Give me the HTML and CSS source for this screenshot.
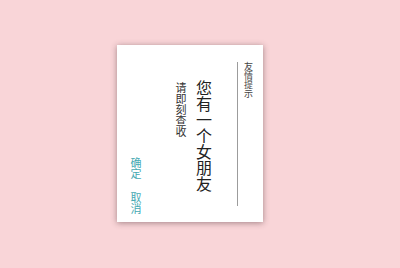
FILE: index.html
```html
<!DOCTYPE html>
<html lang="zh">
<head>
<meta charset="utf-8">
<link rel="stylesheet" href="styles.css">
</head>
<body>
<div class="card">
  <div class="head">友情提示</div>
  <div class="body">
    <div class="title">您有一个女朋友</div>
    <div class="sub">请即刻查收</div>
  </div>
  <div class="actions"><span class="btn">确定</span><span class="btn">取消</span></div>
</div>
</body>
</html>
```
FILE: styles.css
```css
html, body {
  margin: 0;
  padding: 0;
  background: #f9d5d8;
  height: 100%;
}
body {
  padding: 45px 0 0 117px;
  box-sizing: border-box;
  font-family: "Noto Sans CJK SC", "Noto Sans", sans-serif;
}
.card {
  writing-mode: vertical-rl;
  width: 146px;
  height: 177px;
  box-sizing: border-box;
  background: #ffffff;
  box-shadow: 0 1px 6px rgba(60, 30, 35, 0.45);
  padding: 17px 10px 12px 0;
  display: flex;
  flex-direction: column;
}
.head {
  font-size: 9px;
  line-height: 9px;
  color: #444;
  padding-left: 6px;
  border-left: 1px solid #9c9c9c;
  margin-bottom: 4px;
}
.body {
  margin-right: 25px;
  display: flex;
  flex-direction: column;
}
.title {
  font-size: 16px;
  line-height: 16px;
  color: #222;
  padding-top: 18px;
}
.sub {
  font-size: 11px;
  line-height: 11px;
  color: #333;
  margin-right: 10px;
  padding-top: 20px;
}
.actions {
  margin-right: 34px;
  display: flex;
  justify-content: flex-end;
  gap: 13px;
  margin-bottom: -4px;
}
.btn {
  font-size: 11px;
  line-height: 11px;
  color: #45a9b2;
}
```
